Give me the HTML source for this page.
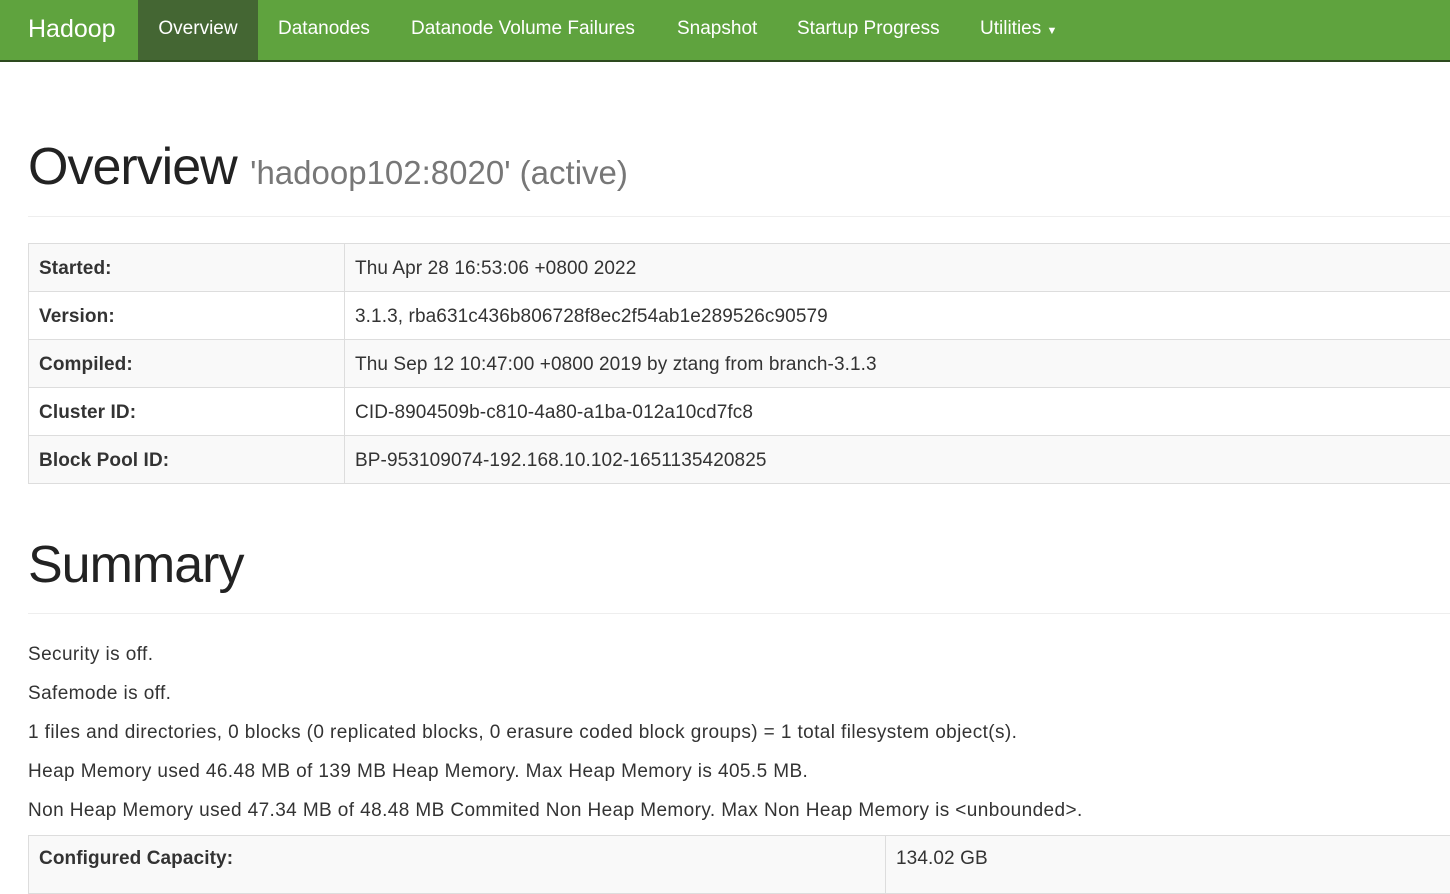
<!DOCTYPE html>
<html><head><style>
body{margin:0;font-family:"Liberation Sans",sans-serif;color:#333;background:#fff;width:1450px;height:859px;overflow:hidden}
.nav{height:60px;background:#5fa33e;border-bottom:2px solid #2d4a1e;position:relative}
.nav a{position:absolute;top:0;height:60px;line-height:58px;color:#fff;font-size:19px;letter-spacing:0px}
.brand{left:28px;font-size:25px!important}
.act{background:#446633;left:138px;width:120px;text-align:center}
h1{position:absolute;margin:0;font-weight:normal;color:#222;font-size:52px;letter-spacing:-1px}
h1 small{font-size:33px;color:#777;letter-spacing:0}
.hr{position:absolute;left:28px;right:0;border-top:1px solid #eee}
table{position:absolute;left:28px;width:1430px;border-collapse:collapse;font-size:19px}
td{border:1px solid #ddd;height:45px;padding:2px 10px 0;letter-spacing:0.1px}
tr:nth-child(odd) td{background:#f9f9f9}
td.k{font-weight:bold;width:295px}
p{position:absolute;left:28px;margin:0;font-size:19px;letter-spacing:0.4px}
</style></head><body>
<div class="nav">
<a class="brand">Hadoop</a>
<a class="act">Overview</a>
<a style="left:278px">Datanodes</a>
<a style="left:411px">Datanode Volume Failures</a>
<a style="left:677px">Snapshot</a>
<a style="left:797px">Startup Progress</a>
<a style="left:980px">Utilities <span style="font-size:11px">▼</span></a>
</div>
<h1 style="left:28px;top:137px">Overview <small>'hadoop102:8020' (active)</small></h1>
<div class="hr" style="top:216px"></div>
<table style="top:243px">
<tr><td class="k">Started:</td><td>Thu Apr 28 16:53:06 +0800 2022</td></tr>
<tr><td class="k">Version:</td><td>3.1.3, rba631c436b806728f8ec2f54ab1e289526c90579</td></tr>
<tr><td class="k">Compiled:</td><td>Thu Sep 12 10:47:00 +0800 2019 by ztang from branch-3.1.3</td></tr>
<tr><td class="k">Cluster ID:</td><td>CID-8904509b-c810-4a80-a1ba-012a10cd7fc8</td></tr>
<tr><td class="k">Block Pool ID:</td><td>BP-953109074-192.168.10.102-1651135420825</td></tr>
</table>
<h1 style="left:28px;top:535px">Summary</h1>
<div class="hr" style="top:613px"></div>
<p style="top:644px">Security is off.</p>
<p style="top:683px">Safemode is off.</p>
<p style="top:722px">1 files and directories, 0 blocks (0 replicated blocks, 0 erasure coded block groups) = 1 total filesystem object(s).</p>
<p style="top:761px">Heap Memory used 46.48 MB of 139 MB Heap Memory. Max Heap Memory is 405.5 MB.</p>
<p style="top:800px">Non Heap Memory used 47.34 MB of 48.48 MB Commited Non Heap Memory. Max Non Heap Memory is &lt;unbounded&gt;.</p>
<table style="top:835px">
<tr><td class="k" style="width:836px;vertical-align:top;padding-top:12px">Configured Capacity:</td><td style="vertical-align:top;padding-top:12px">134.02 GB</td></tr>
</table>
</body></html>
